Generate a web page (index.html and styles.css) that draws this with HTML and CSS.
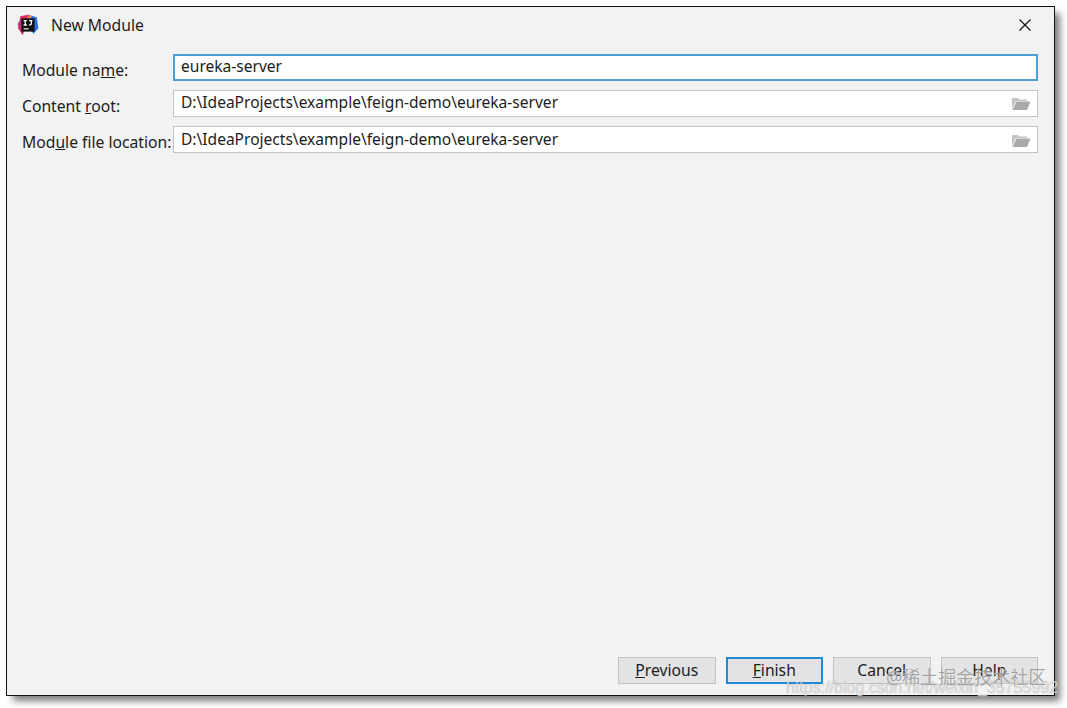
FILE: index.html
```html
<!DOCTYPE html>
<html lang="zh">
<head>
<meta charset="utf-8">
<title>New Module</title>
<link rel="stylesheet" href="styles.css">
</head>
<body>
<div class="dialog">
  <header class="titlebar">
    <svg class="app-icon" width="22" height="22" viewBox="0 0 20 20" aria-hidden="true">
      <path d="M3 2 L11 0.500 L12 5 L5 19 L1 13 Z" fill="#e0305f"/>
      <path d="M11 1 L18 3 L19.500 13 L15 18 L9 10 Z" fill="#2f6fe0"/>
      <path d="M0.500 9 L5 3 L9 6 L5 19 Z" fill="#c2337f"/>
      <path d="M10 1 L14 2 L10 5 Z" fill="#f08a3c"/>
      <rect x="4" y="4" width="12" height="12" fill="#111"/>
      <path d="M6 6 H9 M7.500 6 V10 M6 10 H9 M11 6 H14 M13 6 V9 Q13 10 11 10" stroke="#fff" stroke-width="1.200" fill="none"/>
      <rect x="6" y="13" width="4.500" height="1" fill="#fff"/>
    </svg>
    <span class="title">New Module</span>
    <svg class="close" width="14" height="14" viewBox="0 0 14 14" aria-hidden="true">
      <path d="M1.500 1.500 L12.500 12.500 M12.500 1.500 L1.500 12.500" stroke="#111" stroke-width="1.200" fill="none"/>
    </svg>
  </header>
  <main class="form">
    <div class="row">
      <label class="label">Module na<u>m</u>e:</label>
      <div class="field field-focus"><span class="value">eureka-server</span></div>
    </div>
    <div class="row">
      <label class="label">Content <u>r</u>oot:</label>
      <div class="field">
        <span class="value">D:\IdeaProjects\example\feign-demo\eureka-server</span>
        <svg class="folder" width="20" height="15" viewBox="0 0 20 15" aria-hidden="true">
          <path d="M1 13 V2 H7 L8.500 3.500 H16 V5 H5 L1 13 Z" fill="#c4c4c4"/>
          <path d="M5.500 5.500 H19.500 L16 14 H1.500 Z" fill="#a9a9a9"/>
        </svg>
      </div>
    </div>
    <div class="row">
      <label class="label">Mod<u>u</u>le file location:</label>
      <div class="field">
        <span class="value">D:\IdeaProjects\example\feign-demo\eureka-server</span>
        <svg class="folder" width="20" height="15" viewBox="0 0 20 15" aria-hidden="true">
          <path d="M1 13 V2 H7 L8.500 3.500 H16 V5 H5 L1 13 Z" fill="#c4c4c4"/>
          <path d="M5.500 5.500 H19.500 L16 14 H1.500 Z" fill="#a9a9a9"/>
        </svg>
      </div>
    </div>
  </main>
  <footer class="buttons">
    <button class="btn"><u>P</u>revious</button>
    <button class="btn btn-default"><u>F</u>inish</button>
    <button class="btn">Cancel</button>
    <button class="btn">Help</button>
  </footer>
</div>
<div class="wm wm-url">https://blog.csdn.net/weixin_35755992</div>
<div class="wm wm-site">@稀土掘金技术社区</div>
</body>
</html>
```
FILE: styles.css
```css
* { box-sizing: border-box; }
html, body { margin: 0; height: 100%; background: #fff; overflow: hidden; }
body {
  padding: 6px 12px 12px 6px;
  font-family: "Noto Sans", "Noto Sans CJK SC", sans-serif;
  font-size: 15.7px;
  color: #1c1c1c;
  position: relative;
}
.dialog {
  width: 1049px;
  height: 690px;
  background: #f2f2f2;
  border: 1px solid #111;
  box-shadow: 6px 6px 7px -1px #7d7d7d;
  display: flex;
  flex-direction: column;
}
.titlebar {
  height: 36px;
  display: flex;
  align-items: center;
  padding: 0 22px 0 10px;
  flex: none;
}
.app-icon { flex: none; }
.title { margin-left: 12px; flex: 1; }
.form {
  flex: 1;
  display: flex;
  flex-direction: column;
  gap: 9px;
  padding: 11px 16px 0 15px;
}
.row { display: flex; align-items: flex-start; }
.label { width: 151px; flex: none; padding-top: 6px; line-height: 20px; white-space: nowrap; }
.field {
  flex: 1;
  height: 27px;
  background: #fff;
  border: 1px solid #c4c4c4;
  display: flex;
  align-items: center;
  justify-content: space-between;
  padding: 0 6px 3px 7px;
  font-size: 15.55px;
}
.row + .row + .row .field { padding-bottom: 2px; }
.field-focus { border: 2px solid #4c9fd3; padding-left: 6px; }
.folder { flex: none; margin-top: 3px; }
.buttons {
  flex: none;
  display: flex;
  justify-content: flex-end;
  gap: 10px;
  padding: 0 16px 11px 0;
}
.btn {
  width: 97.5px;
  height: 27px;
  font: inherit;
  color: inherit;
  background: #e3e3e3;
  border: 1px solid #c2c2c2;
  padding: 0 0 1px;
}
.btn-default { border: 2px solid #1f8ad6; }
.wm { position: absolute; white-space: nowrap; }
.wm-url { left: 786px; top: 679px; font-size: 16px; font-family: "Liberation Sans", sans-serif; color: rgba(255,255,255,.6); text-shadow: 0 0 1px rgba(120,120,120,.7); }
.wm-site { left: 886px; top: 663px; font-size: 18px; color: rgba(125,125,125,.7); text-shadow: 0 0 1px #fff; }
```
